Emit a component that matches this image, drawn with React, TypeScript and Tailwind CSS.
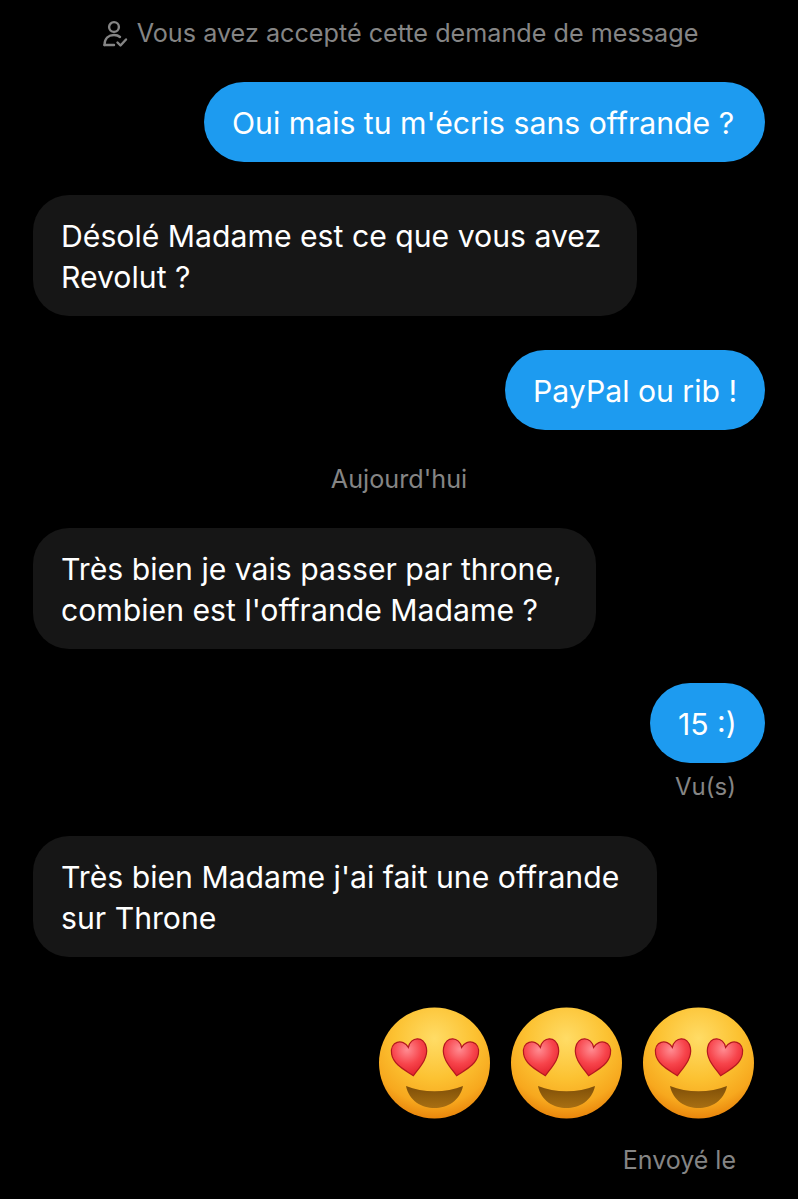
import type { ReactNode } from "react";

function Emoji({ id }: { id: string }) {
  const heart = "M0 -10 C4 -21 19 -20 19 -6 C19 6 7 14 0 21 C-7 14 -19 6 -19 -6 C-19 -20 -4 -21 0 -10 Z";
  return (
    <svg width="116" height="116" viewBox="0 0 116 116" className="block">
      <defs>
        <radialGradient id={`f${id}`} cx="50%" cy="28%" r="72%">
          <stop offset="0%" stopColor="#ffdc66" />
          <stop offset="50%" stopColor="#fcc232" />
          <stop offset="82%" stopColor="#f7a81e" />
          <stop offset="100%" stopColor="#e9860c" />
        </radialGradient>
        <radialGradient id={`h${id}`} cx="45%" cy="25%" r="75%">
          <stop offset="0%" stopColor="#ff8d93" />
          <stop offset="55%" stopColor="#f7444b" />
          <stop offset="100%" stopColor="#e2202a" />
        </radialGradient>
        <linearGradient id={`m${id}`} x1="0" y1="0" x2="0" y2="1">
          <stop offset="0%" stopColor="#7f4f08" />
          <stop offset="100%" stopColor="#a86f12" />
        </linearGradient>
      </defs>
      <circle cx="57.5" cy="58" r="55.5" fill={`url(#f${id})`} />
      <g transform="translate(33 51.5) rotate(-10) scale(0.93)">
        <path d={heart} fill={`url(#h${id})`} stroke="#b3181f" strokeWidth="1.3" />
      </g>
      <g transform="translate(83 51.5) rotate(10) scale(0.93)">
        <path d={heart} fill={`url(#h${id})`} stroke="#b3181f" strokeWidth="1.3" />
      </g>
      <path d="M29 81 C46 88 69 88 86 81 C83 96 70 103 57.5 103 C45 103 32 96 29 81 Z" fill={`url(#m${id})`} />
    </svg>
  );
}

function Bubble({ children, mine, className }: { children: ReactNode; mine?: boolean; className: string }) {
  return (
    <div className={`px-[28px] pt-[21px] text-[30.2px] leading-[41px] text-white ${mine ? "h-[80px] self-end whitespace-nowrap rounded-[40px] bg-[#1d9bf0]" : "h-[121px] self-start rounded-[36px] bg-[#161616]"} ${className}`}>
      {children}
    </div>
  );
}

export default function App() {
  return (
    <div className="flex h-[1199px] w-[798px] flex-col overflow-hidden bg-black px-[33px] font-['Inter','Liberation_Sans',sans-serif]">
      <div className="mt-[18px] flex h-[32px] items-center justify-center gap-[9px] pl-[3px] text-[25.2px] text-[#858585]">
        <svg width="25" height="28" viewBox="0 0 25 28" fill="none" stroke="#858585" strokeWidth="2.4" strokeLinecap="round" strokeLinejoin="round">
          <circle cx="11" cy="7" r="4.9" />
          <path d="M1.5 25 C1.5 18 6 15 11 15 C13.5 15 15.5 15.6 17 17" />
          <path d="M1.5 25 H11" />
          <path d="M14.5 22.5 L17.5 25.5 L23 19.5" />
        </svg>
        <span>Vous avez accepté cette demande de message</span>
      </div>
      <Bubble mine className="mt-[32px] w-[561px]">Oui mais tu m'écris sans offrande ?</Bubble>
      <Bubble className="mt-[33px] w-[604px]">Désolé Madame est ce que vous avez Revolut ?</Bubble>
      <Bubble mine className="mt-[34px] w-[260px]">PayPal ou rib !</Bubble>
      <div className="mt-[33px] text-center text-[25.2px] leading-[32px] text-[#858585]">Aujourd'hui</div>
      <Bubble className="mt-[33px] w-[563px]">Très bien je vais passer par throne, combien est l'offrande Madame ?</Bubble>
      <Bubble mine className="mt-[34px] w-[115px]">15 :)</Bubble>
      <div className="mt-[8px] self-end pr-[29px] text-[24px] leading-[32px] text-[#858585]">Vu(s)</div>
      <Bubble className="mt-[33px] w-[624px]">Très bien Madame j'ai fait une offrande sur Throne</Bubble>
      <div className="mt-[48px] flex gap-[16px] self-end pr-[8px]">
        <Emoji id="a" />
        <Emoji id="b" />
        <Emoji id="c" />
      </div>
      <div className="mt-[23px] self-end pr-[29px] text-[25px] leading-[32px] text-[#858585]">Envoyé le</div>
    </div>
  );
}
